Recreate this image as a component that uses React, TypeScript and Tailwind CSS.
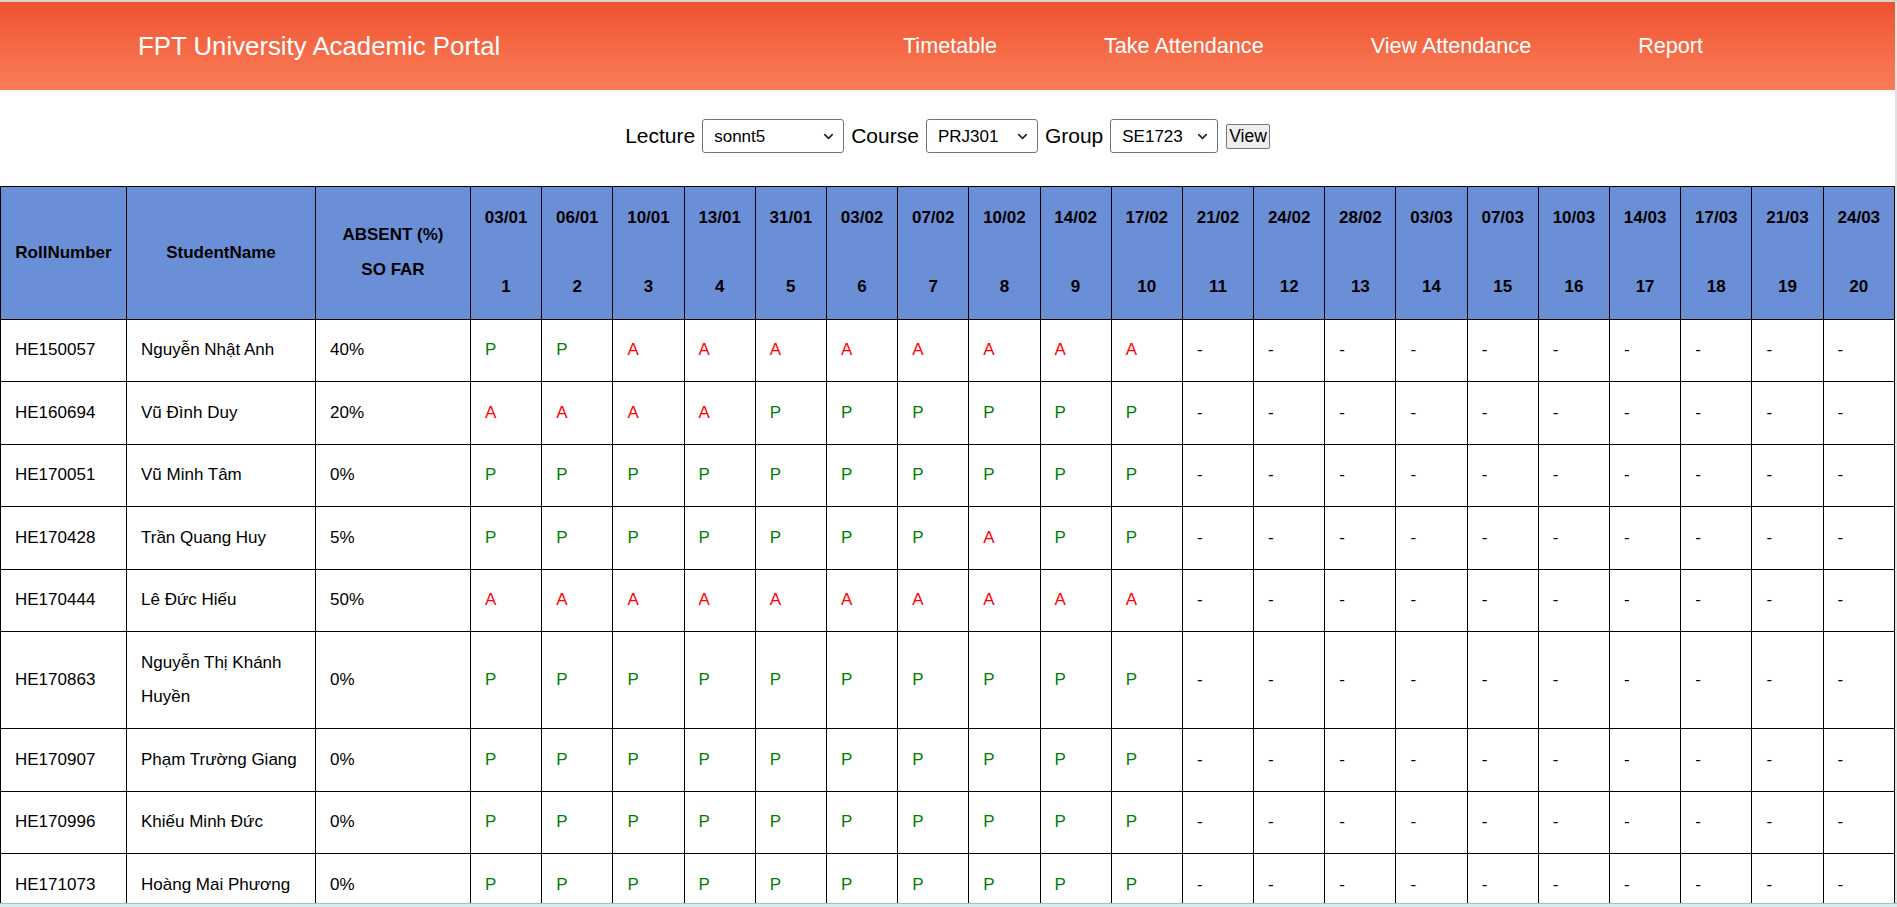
import { ChevronDown } from "lucide-react";

const dates = [
  "03/01", "06/01", "10/01", "13/01", "31/01", "03/02", "07/02", "10/02", "14/02", "17/02",
  "21/02", "24/02", "28/02", "03/03", "07/03", "10/03", "14/03", "17/03", "21/03", "24/03",
];

interface Student {
  roll: string;
  name: string;
  absent: string;
  marks: string;
}

const students: Student[] = [
  { roll: "HE150057", name: "Nguyễn Nhật Anh", absent: "40%", marks: "PPAAAAAAAA" },
  { roll: "HE160694", name: "Vũ Đình Duy", absent: "20%", marks: "AAAAPPPPPP" },
  { roll: "HE170051", name: "Vũ Minh Tâm", absent: "0%", marks: "PPPPPPPPPP" },
  { roll: "HE170428", name: "Trần Quang Huy", absent: "5%", marks: "PPPPPPPAPP" },
  { roll: "HE170444", name: "Lê Đức Hiếu", absent: "50%", marks: "AAAAAAAAAA" },
  { roll: "HE170863", name: "Nguyễn Thị Khánh Huyền", absent: "0%", marks: "PPPPPPPPPP" },
  { roll: "HE170907", name: "Phạm Trường Giang", absent: "0%", marks: "PPPPPPPPPP" },
  { roll: "HE170996", name: "Khiếu Minh Đức", absent: "0%", marks: "PPPPPPPPPP" },
  { roll: "HE171073", name: "Hoàng Mai Phương", absent: "0%", marks: "PPPPPPPPPP" },
];

const navItems = ["Timetable", "Take Attendance", "View Attendance", "Report"];

function Picker({ value, width }: { value: string; width: string }) {
  return (
    <div className={`relative ${width}`}>
      <select
        defaultValue={value}
        className="h-[34px] w-full appearance-none rounded-[3px] border border-[#767676] bg-white pl-[11px] text-[17px] text-black outline-none"
      >
        <option>{value}</option>
      </select>
      <ChevronDown
        className="pointer-events-none absolute right-[8px] top-[10px] h-[15px] w-[15px] text-[#222]"
        strokeWidth={2.6}
      />
    </div>
  );
}

function Mark({ m }: { m: string }) {
  if (m === "P") return <span className="text-[#008000]">P</span>;
  if (m === "A") return <span className="text-[#ff0000]">A</span>;
  return <span>-</span>;
}

export default function App() {
  return (
    <div
      className="flex h-[907px] w-full flex-col overflow-hidden border-t-2 border-[#d4d4d4] bg-white text-black"
      style={{ fontFamily: '"Liberation Sans", Arial, sans-serif' }}
    >
      <div className="flex min-h-0 flex-1">
        <div className="min-w-0 flex-1 overflow-hidden">
          {/* Header */}
          <div className="flex h-[88px] items-center bg-gradient-to-b from-[#ef5130] to-[#fa7d57] pl-[138px] pr-[192px] text-white">
            <div className="text-[25.8px]">FPT University Academic Portal</div>
            <nav className="ml-auto flex gap-[107px] text-[21.6px]">
              {navItems.map((n) => (
                <a key={n} className="cursor-pointer">
                  {n}
                </a>
              ))}
            </nav>
          </div>

          {/* Filters */}
          <div className="flex h-[96px] items-center justify-center gap-[7px] pb-[4px] text-[21px]">
            <span>Lecture</span>
            <Picker value="sonnt5" width="w-[142px]" />
            <span>Course</span>
            <Picker value="PRJ301" width="w-[112px]" />
            <span>Group</span>
            <Picker value="SE1723" width="w-[108px]" />
            <button className="ml-[1px] h-[25px] rounded-[2px] border border-[#767676] bg-[#efefef] px-[2px] text-[17.5px] leading-[20px]">
              View
            </button>
          </div>

          {/* Attendance table */}
          <table className="w-full table-fixed border-collapse text-[17px] leading-[34.5px]">
            <colgroup>
              <col className="w-[126px]" />
              <col className="w-[189px]" />
              <col className="w-[155px]" />
              {dates.map((d) => (
                <col key={d} />
              ))}
            </colgroup>
            <thead>
              <tr className="bg-[#6b8fd7] font-bold">
                <th className="border border-black py-[14px]">RollNumber</th>
                <th className="border border-black py-[14px]">StudentName</th>
                <th className="border border-black py-[14px]">
                  ABSENT (%)
                  <br />
                  SO FAR
                </th>
                {dates.map((d, i) => (
                  <th key={d} className="border border-black py-[14px]">
                    {d}
                    <br />
                    <br />
                    {i + 1}
                  </th>
                ))}
              </tr>
            </thead>
            <tbody>
              {students.map((s) => (
                <tr key={s.roll}>
                  <td className="border border-black px-[14px] py-[13.5px]">{s.roll}</td>
                  <td className="border border-black px-[14px] py-[13.5px]">{s.name}</td>
                  <td className="border border-black px-[14px] py-[13.5px]">{s.absent}</td>
                  {dates.map((d, i) => (
                    <td key={d} className="border border-black px-[14px] py-[13.5px]">
                      <Mark m={s.marks[i] ?? "-"} />
                    </td>
                  ))}
                </tr>
              ))}
            </tbody>
          </table>
        </div>
        <div className="w-[2px] shrink-0 bg-[#e2e2e2]" />
      </div>
      <div className="h-[1px] shrink-0 bg-[#a9bdbd]" />
      <div className="h-[3px] shrink-0 bg-[#d0eeee]" />
    </div>
  );
}
